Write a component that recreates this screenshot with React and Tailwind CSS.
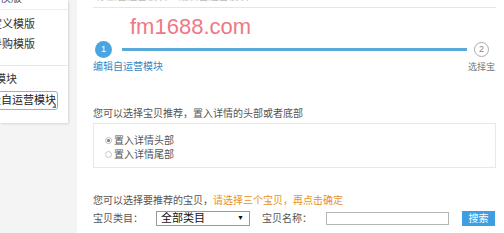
export default function App() {
  const font = { fontFamily: '"Liberation Sans", "Noto Sans CJK SC", sans-serif' };
  return (
    <div className="w-[504px] h-[233px] overflow-hidden bg-[#f4f4f4] flex" style={font}>
      {/* left panel */}
      <div className="w-[68px] h-[123px] bg-white shadow-[1px_1px_2px_rgba(0,0,0,0.12)] overflow-hidden shrink-0 text-[11px] text-[#333]">
        <div className="h-[10px] overflow-hidden border-b border-[#eeeeee]">
          <div className="mt-[-9px] ml-[-22px] whitespace-nowrap leading-[14px] text-[#555]">店铺模版</div>
        </div>
        <div className="mt-[7px] ml-[-20px] whitespace-nowrap leading-[14px]">自定义模版</div>
        <div className="mt-[6px] ml-[-9px] whitespace-nowrap leading-[14px]">导购模版</div>
        <div className="mt-[14px] border-t border-[#e8e8e8]"></div>
        <div className="mt-[6px] ml-[-27px] whitespace-nowrap leading-[14px]">运营模块</div>
        <div className="mt-[5px] ml-[-4px] w-[62px] h-[19px] border border-[#6ec3d3] rounded-[3px] relative flex items-center whitespace-nowrap text-[11px] text-[#222] overflow-hidden">
          <span className="ml-[-7px]">设自运营模块</span>
          <span className="absolute right-[1px] bottom-[1px] w-0 h-0 border-l-[4px] border-l-transparent border-b-[4px] border-b-[#3b8fd8]"></span>
        </div>
      </div>
      <div className="w-[9px] shrink-0"></div>
      {/* main */}
      <div className="flex-1 bg-white h-[233px] overflow-hidden pl-[16px] pr-[8px] text-[10px] text-[#555]">
        <div className="h-[8px] overflow-hidden border-b border-[#e6e6e6]">
          <div className="mt-[-10px] ml-[4px] whitespace-nowrap leading-[14px] text-[#bbb] text-[10px]">添加自运营模块 &gt; 编辑自运营模块</div>
        </div>
        <div className="mt-[6px] ml-[37px] text-[22px] leading-[26px] text-[#f07884]" style={{ fontFamily: '"Liberation Sans", sans-serif' }}>fm1688.com</div>
        <div className="flex items-center h-[18px]">
          <div className="ml-[2px] w-[17px] h-[17px] rounded-full bg-[#4aa6e2] flex items-center justify-center text-white text-[9px] leading-none shrink-0">1</div>
          <div className="ml-[10px] w-[345px] h-[3px] bg-[#5aaad9] shrink-0"></div>
          <div className="ml-[7px] w-[15px] h-[15px] rounded-full border border-[#aaaaaa] flex items-center justify-center text-[#888] text-[9px] leading-none shrink-0">2</div>
        </div>
        <div className="flex mt-[2px] leading-[14px] whitespace-nowrap">
          <div className="w-[375px] shrink-0 text-[#3a86bf]">编辑自运营模块</div>
          <div className="w-[28px] overflow-hidden text-[#777] text-[9px]">选择宝贝</div>
        </div>
        <div className="mt-[33px] leading-[14px] whitespace-nowrap">您可以选择宝贝推荐，置入详情的头部或者底部</div>
        <div className="mt-[2px] h-[45px] border border-[#e8e8e8] pl-[11px] pt-[9px]">
          <div className="flex items-center h-[14px]">
            <span className="w-[7px] h-[7px] rounded-full border border-[#bbb] flex items-center justify-center shrink-0">
              <span className="w-[3px] h-[3px] rounded-full bg-[#777]"></span>
            </span>
            <span className="ml-[2px]">置入详情头部</span>
          </div>
          <div className="flex items-center h-[14px]">
            <span className="w-[7px] h-[7px] rounded-full border border-[#c8c8c8] shrink-0"></span>
            <span className="ml-[2px]">置入详情尾部</span>
          </div>
        </div>
        <div className="mt-[26px] leading-[14px] whitespace-nowrap">
          您可以选择要推荐的宝贝，<span className="text-[#e8921e]">请选择三个宝贝，再点击确定</span>
        </div>
        <div className="mt-[2px] flex items-center h-[16px] whitespace-nowrap">
          <span className="w-[63px] shrink-0">宝贝类目：</span>
          <div className="w-[94px] h-[15px] border border-[#9a9a9a] flex items-center justify-between pl-[4px] pr-[5px] text-[11px] text-[#111] shrink-0">
            <span>全部类目</span>
            <span className="text-[7px]">▼</span>
          </div>
          <span className="ml-[12px] w-[64px] shrink-0">宝贝名称：</span>
          <div className="w-[123px] h-[13px] border border-[#b5b5b5] shrink-0"></div>
          <div className="ml-[13px] w-[33px] h-[15px] bg-[#3d9fe0] text-white flex items-center justify-center text-[10px] shrink-0">搜索</div>
        </div>
      </div>
    </div>
  );
}
